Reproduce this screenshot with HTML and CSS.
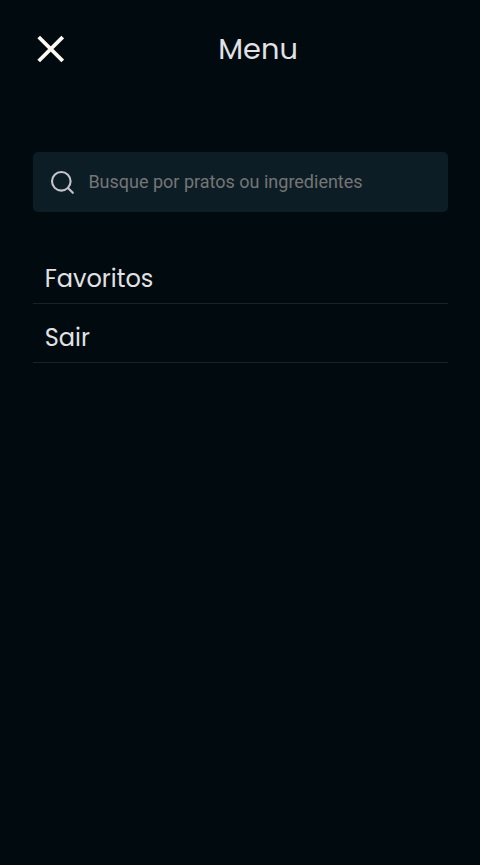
FILE: index.html
```html
<!DOCTYPE html>
<html lang="pt-BR">
<head>
<meta charset="utf-8">
<title>Menu</title>
<link rel="stylesheet" href="styles.css">
</head>
<body>
<header class="header">
  <button class="close" aria-label="Fechar">
    <svg width="28" height="28" viewBox="0 0 28 28"><path d="M2.7 2L26.7 26M26.7 2L2.7 26"/></svg>
  </button>
  <h1 class="title">Menu</h1>
</header>
<main class="content">
  <label class="search">
    <svg class="search-icon" width="26" height="26" viewBox="0 0 26 26"><circle cx="11.3" cy="12.3" r="9.3"/><path d="M18 19L22.8 23.8"/></svg>
    <input class="search-input" type="text" placeholder="Busque por pratos ou ingredientes">
  </label>
  <nav class="nav">
    <a class="nav-item"><span class="favorites">Favoritos</span></a>
    <a class="nav-item"><span class="logout">Sair</span></a>
  </nav>
</main>
</body>
</html>
```
FILE: styles.css
```css
* {
  box-sizing: border-box;
  margin: 0;
}

body {
  min-height: 100vh;
  background: #000a0f;
  color: #e1e1e6;
  font-family: Poppins, "Open Sans", sans-serif;
}

.header {
  display: flex;
  align-items: center;
  height: 98px;
  padding-left: 36px;
}

.close {
  display: flex;
  padding: 0;
  border: 0;
  background: none;
}

.close path {
  fill: none;
  stroke: #fffaf1;
  stroke-width: 3.8;
}

.title {
  margin-left: 154.3px;
  font-size: 28.8px;
  font-weight: 400;
  line-height: 40px;
}

.content {
  padding: 54px 32px 0 33px;
}

.search {
  display: flex;
  align-items: center;
  gap: 12.4px;
  height: 60px;
  padding: 0 17px;
  border-radius: 5px;
  background: #0d1d25;
}

.search-icon {
  flex: none;
  fill: none;
  stroke: #c4c4cc;
  stroke-width: 2.1;
  stroke-linecap: round;
}

.search-input {
  flex: 1;
  min-width: 0;
  padding: 0 0 2px;
  border: 0;
  outline: 0;
  background: none;
  color: #c4c4cc;
  font: 18px Roboto, sans-serif;
}

.search-input::placeholder {
  color: #757575;
}

.nav {
  margin-top: 33px;
}

.nav-item {
  display: flex;
  align-items: center;
  height: 59px;
  padding: 9px 11.7px 0;
  border-bottom: 1px solid #192227;
  font-size: 24px;
}
```
